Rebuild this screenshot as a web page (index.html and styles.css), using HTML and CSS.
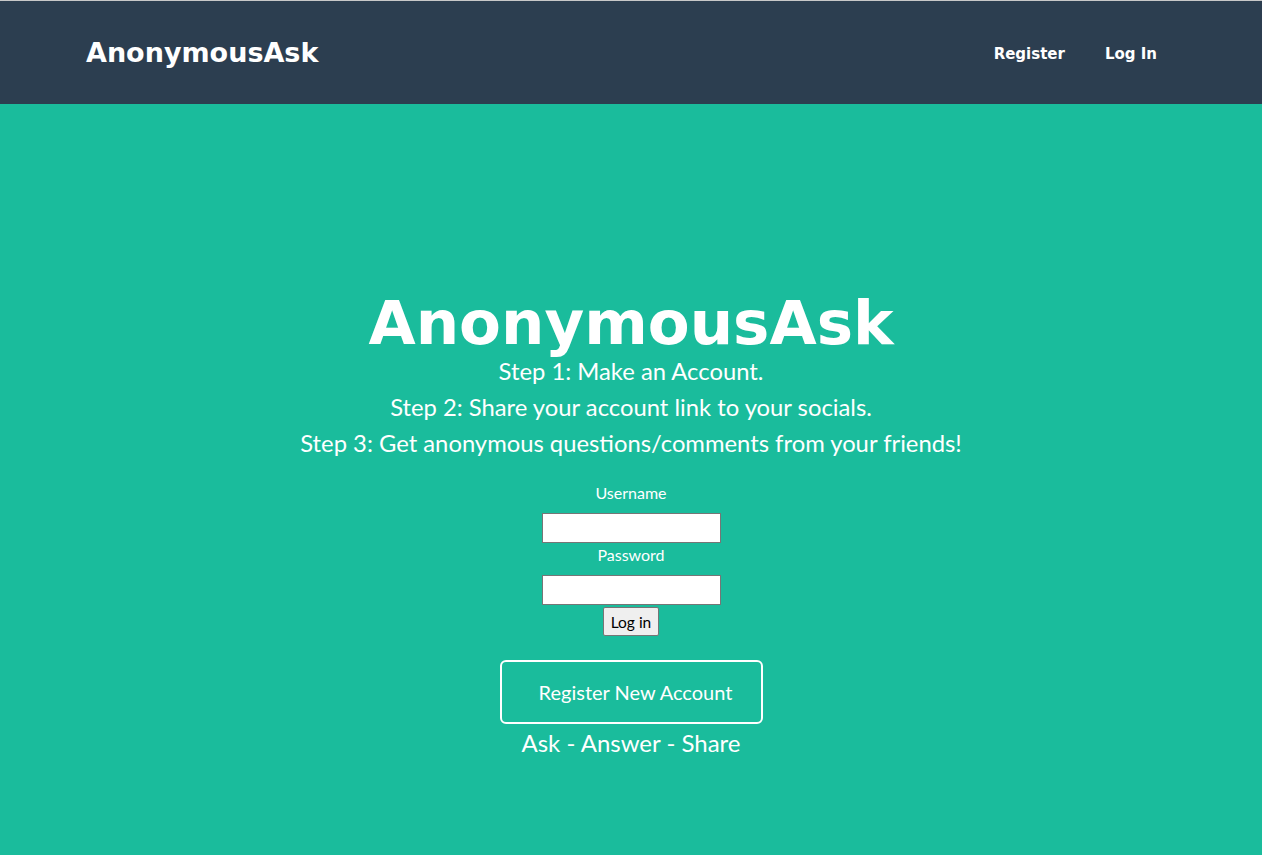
FILE: index.html
```html
<!DOCTYPE html>
<html>
<head>
<meta charset="utf-8">
<link rel="stylesheet" href="styles.css">
</head>
<body>
<nav class="navbar">
  <a class="brand" href="#">AnonymousAsk</a>
  <ul class="nav-links">
    <li><a href="#">Register</a></li>
    <li><a href="#">Log In</a></li>
  </ul>
</nav>
<header class="hero">
  <h1 class="title">AnonymousAsk</h1>
  <p class="step step-first">Step 1: Make an Account.</p>
  <p class="step">Step 2: Share your account link to your socials.</p>
  <p class="step">Step 3: Get anonymous questions/comments from your friends!</p>
  <form class="login">
    <label class="label" for="u">Username</label>
    <input class="field" id="u" type="text">
    <label class="label" for="p">Password</label>
    <input class="field" id="p" type="password">
    <button class="submit" type="button">Log in</button>
  </form>
  <a class="register-btn" href="#">Register New Account</a>
  <p class="tagline">Ask - Answer - Share</p>
</header>
</body>
</html>
```
FILE: styles.css
```css
html, body {
  margin: 0;
  padding: 0;
  height: 100%;
}
body {
  font-family: Lato, "Open Sans", sans-serif;
  background: #1abc9c;
  color: #fff;
}
.navbar {
  background: #2c3e50;
  border-top: 1px solid #c8c8c8;
  height: 103px;
  display: flex;
  align-items: center;
  justify-content: space-between;
  padding: 0 105px 0 86px;
}
.brand {
  font-family: "DejaVu Sans", sans-serif;
  font-weight: bold;
  font-size: 27px;
  color: #fff;
  text-decoration: none;
}
.nav-links {
  list-style: none;
  display: flex;
  gap: 40px;
  margin: 0;
  padding: 0;
}
.nav-links a {
  font-family: "DejaVu Sans", sans-serif;
  font-weight: bold;
  font-size: 15px;
  color: #fff;
  text-decoration: none;
}
.hero {
  display: flex;
  flex-direction: column;
  align-items: center;
  text-align: center;
  padding-top: 189px;
}
.title {
  font-family: "DejaVu Sans", sans-serif;
  font-weight: bold;
  font-size: 61px;
  line-height: 60px;
  margin: 0;
}
.step {
  font-size: 23.8px;
  line-height: 36px;
  margin: 0;
}
.login {
  display: flex;
  flex-direction: column;
  align-items: center;
  margin-top: 22px;
}
.label {
  font-size: 16px;
  line-height: 20px;
  margin-bottom: 10px;
}
.field {
  width: 179px;
  height: 30px;
  box-sizing: border-box;
  border: 1px solid #767676;
  background: #fff;
  margin: 0 0 2px;
}
.submit {
  font-family: Lato, sans-serif;
  font-size: 15.5px;
  height: 29px;
  padding: 0 7px;
  border: 1px solid #767676;
  border-radius: 2px;
  background: #efefef;
  color: #000;
}
.register-btn {
  margin-top: 24px;
  width: 263px;
  height: 64px;
  box-sizing: border-box;
  border: 2px solid #fff;
  border-radius: 6px;
  color: #fff;
  font-size: 20px;
  text-decoration: none;
  display: flex;
  align-items: center;
  justify-content: center;
  padding-left: 9px;
}
.tagline {
  font-size: 24px;
  line-height: 28px;
  margin: 5px 0 0;
}
```
